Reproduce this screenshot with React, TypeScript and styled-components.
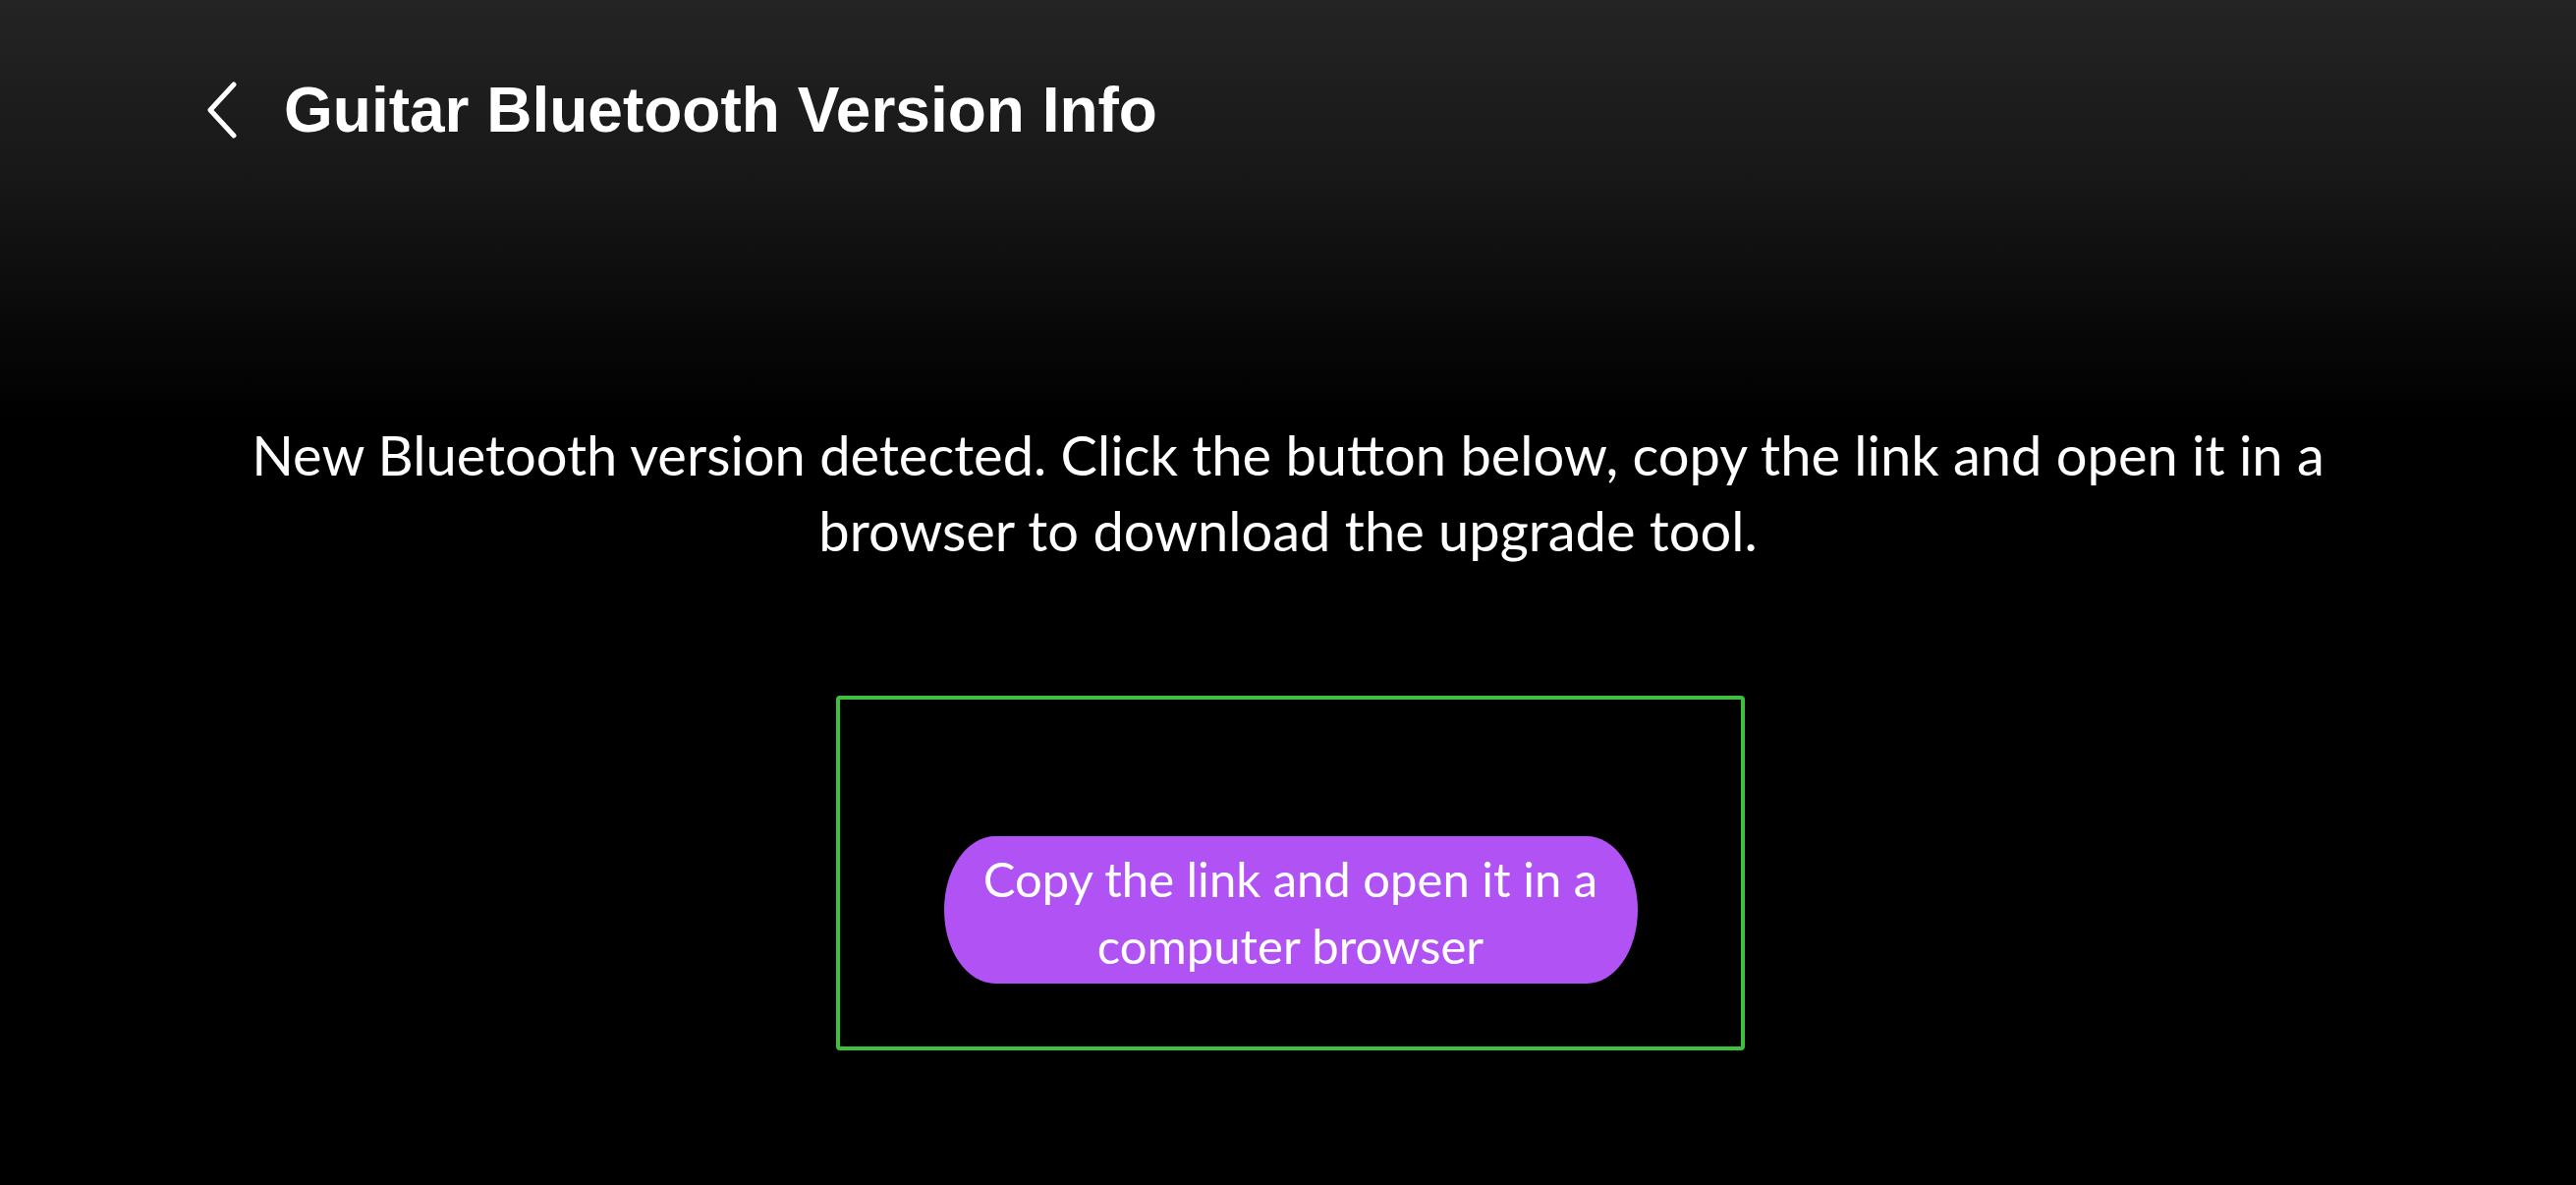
import React from "react";
import styled, { createGlobalStyle } from "styled-components";

const Global = createGlobalStyle`
  html, body { margin: 0; padding: 0; background: #000; }
  body { font-family: "Liberation Sans", Arial, sans-serif; }
`;

const Page = styled.div`
  width: 2622px;
  height: 1206px;
  background: linear-gradient(180deg, #242424 0px, #161616 200px, #070707 340px, #000 430px, #000 100%);
  display: flex;
  flex-direction: column;
  align-items: stretch;
  overflow: hidden;
`;

const Header = styled.header`
  display: flex;
  align-items: center;
  gap: 47px;
  padding: 82px 0 0 208px;
  height: 60px;
`;

const BackButton = styled.button`
  background: none;
  border: none;
  padding: 0;
  width: 34px;
  height: 58px;
  display: flex;
  cursor: pointer;
`;

const Title = styled.h1`
  margin: 0;
  font-family: "Liberation Sans", Arial, sans-serif;
  font-weight: 700;
  font-size: 64px;
  line-height: 60px;
  color: #fff;
`;

const Message = styled.p`
  margin: 282px 0 0;
  text-align: center;
  color: #fff;
  font-family: Lato, "Noto Sans", sans-serif;
  font-weight: 400;
  font-size: 56px;
  line-height: 77px;
`;

const Frame = styled.div`
  align-self: center;
  width: 925px;
  height: 361px;
  box-sizing: border-box;
  border: 4px solid #3dc13d;
  border-radius: 4px;
  margin: 130px 0 0 5px;
  display: flex;
  justify-content: center;
  padding-top: 139px;
`;

const CopyButton = styled.button`
  width: 706px;
  height: 150px;
  background: #b052f4;
  border: none;
  border-radius: 52px / 75px;
  color: #fff;
  font-family: Lato, "Noto Sans", sans-serif;
  font-size: 49px;
  line-height: 68px;
  padding: 4px 30px 0;
  cursor: pointer;
  box-sizing: border-box;
  text-align: center;
`;

function Chevron() {
  return (
    <svg width="34" height="58" viewBox="0 0 34 58" fill="none">
      <path d="M30 3 L6 29 L30 55" stroke="#fff" strokeWidth="5" strokeLinecap="round" strokeLinejoin="round" />
    </svg>
  );
}

export default function App() {
  return (
    <>
      <Global />
      <Page>
        <Header>
          <BackButton aria-label="Back">
            <Chevron />
          </BackButton>
          <Title>Guitar Bluetooth Version Info</Title>
        </Header>
        <Message>
          New Bluetooth version detected. Click the button below, copy the link and open it in a
          <br />
          browser to download the upgrade tool.
        </Message>
        <Frame>
          <CopyButton>
            Copy the link and open it in a<br />computer browser
          </CopyButton>
        </Frame>
      </Page>
    </>
  );
}
